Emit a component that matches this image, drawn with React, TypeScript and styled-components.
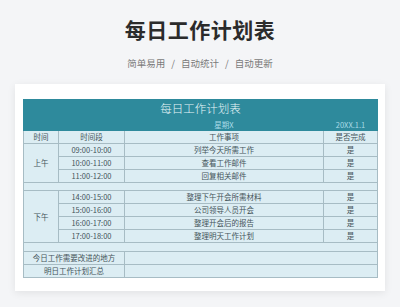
import React from 'react';
import styled, { createGlobalStyle } from 'styled-components';

const Global = createGlobalStyle`
  html, body { margin: 0; padding: 0; background: #f4f5f7; }
  body { font-family: "Noto Sans CJK SC", "Noto Sans", sans-serif; }
`;

const Page = styled.div`
  width: 400px;
  height: 307px;
  display: flex;
  flex-direction: column;
  align-items: center;
  overflow: hidden;
`;

const Title = styled.h1`
  margin: 15px 0 0;
  font-size: 21px;
  line-height: 28px;
  font-weight: 700;
  color: #2b2b2b;
  letter-spacing: 0.5px;
`;

const Subtitle = styled.div`
  margin-top: 13px;
  font-size: 9.5px;
  line-height: 14px;
  color: #7a7a7a;
  display: flex;
  gap: 6px;
`;

const Card = styled.div`
  margin-top: 14px;
  width: 370px;
  box-sizing: border-box;
  background: #fff;
  padding: 15px 8px 13px;
  box-shadow: 0 2px 8px rgba(0, 0, 0, 0.08);
`;

const Table = styled.table`
  width: 354px;
  border-collapse: collapse;
  table-layout: fixed;
  font-size: 7.5px;
  color: #3a4a50;
`;

const Cell = styled.td<{ $h?: number; $teal?: boolean; $light?: boolean }>`
  height: ${(p) => p.$h ?? 12}px;
  padding: 0;
  line-height: 1;
  text-align: center;
  font-weight: 400;
  border: 1px solid ${(p) => (p.$teal ? '#2e8a9c' : '#a7bcc4')};
  background: ${(p) => (p.$teal ? '#2e8a9c' : '#dcedf3')};
  color: ${(p) => (p.$light ? '#a9dbe7' : '#44545a')};
`;

const BigCell = styled(Cell)`
  font-size: 11.5px;
  color: #e6f5f8;
  font-weight: 300;
`;

const morning = [
  ['09:00-10:00', '列举今天所需工作'],
  ['10:00-11:00', '查看工作邮件'],
  ['11:00-12:00', '回复相关邮件'],
];
const afternoon = [
  ['14:00-15:00', '整理下午开会所需材料'],
  ['15:00-16:00', '公司领导人员开会'],
  ['16:00-17:00', '整理开会后的报告'],
  ['17:00-18:00', '整理明天工作计划'],
];

export default function App() {
  return (
    <Page>
      <Global />
      <Title>每日工作计划表</Title>
      <Subtitle>
        <span>简单易用</span><span>/</span><span>自动统计</span><span>/</span><span>自动更新</span>
      </Subtitle>
      <Card>
        <Table>
          <colgroup>
            <col style={{ width: 35 }} />
            <col style={{ width: 66 }} />
            <col style={{ width: 199 }} />
            <col style={{ width: 54 }} />
          </colgroup>
          <tbody>
            <tr><BigCell colSpan={4} $teal $h={18}>每日工作计划表</BigCell></tr>
            <tr>
              <Cell colSpan={2} $teal $light $h={11} />
              <Cell $teal $light $h={11}>星期X</Cell>
              <Cell $teal $light $h={11}>20XX.1.1</Cell>
            </tr>
            <tr>
              <Cell>时间</Cell><Cell>时间段</Cell><Cell>工作事项</Cell><Cell>是否完成</Cell>
            </tr>
            {morning.map(([t, task], i) => (
              <tr key={t}>
                {i === 0 && <Cell rowSpan={3}>上午</Cell>}
                <Cell>{t}</Cell><Cell>{task}</Cell><Cell>是</Cell>
              </tr>
            ))}
            <tr><Cell colSpan={4} $h={7} /></tr>
            {afternoon.map(([t, task], i) => (
              <tr key={t}>
                {i === 0 && <Cell rowSpan={4}>下午</Cell>}
                <Cell>{t}</Cell><Cell>{task}</Cell><Cell>是</Cell>
              </tr>
            ))}
            <tr><Cell colSpan={4} $h={8} /></tr>
            <tr><Cell colSpan={2}>今日工作需要改进的地方</Cell><Cell colSpan={2} /></tr>
            <tr><Cell colSpan={2}>明日工作计划汇总</Cell><Cell colSpan={2} /></tr>
          </tbody>
        </Table>
      </Card>
    </Page>
  );
}
